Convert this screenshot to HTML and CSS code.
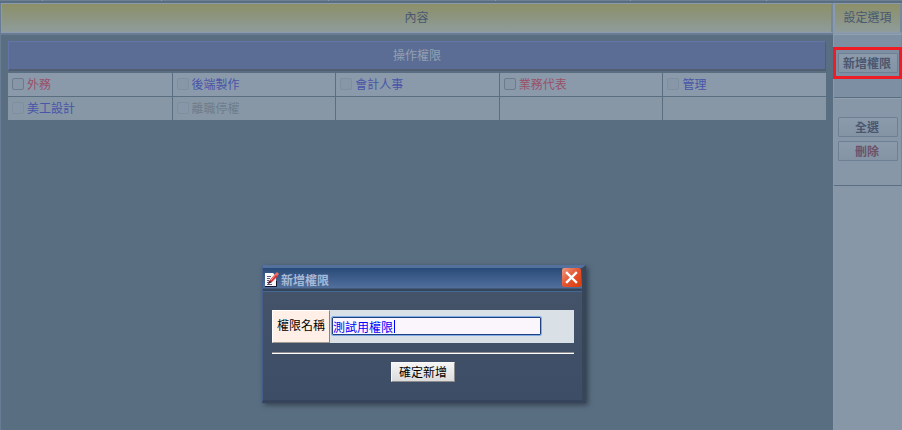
FILE: index.html
```html
<!DOCTYPE html>
<html lang="zh-Hant">
  <head>
    <meta charset="UTF-8" />
    <meta name="viewport" content="width=device-width, initial-scale=1.0" />
    <title>操作權限</title>
    <link rel="stylesheet" href="styles.css">
  </head>
  <body>
    <div class="top-strip">
      <span></span><span></span><span></span><span></span><span></span><span></span>
    </div>

    <div class="page">
      <main class="content">
        <h2 class="column-title">內容</h2>
        <div class="content-body">
          <h3 class="banner">操作權限</h3>
          <table class="permissions">
            <tr>
              <td><label class="red"><input type="checkbox" />外務</label></td>
              <td><label><input type="checkbox" disabled />後端製作</label></td>
              <td><label><input type="checkbox" disabled />會計人事</label></td>
              <td><label class="red"><input type="checkbox" />業務代表</label></td>
              <td><label><input type="checkbox" disabled />管理</label></td>
            </tr>
            <tr>
              <td><label><input type="checkbox" disabled />美工設計</label></td>
              <td><label class="gray"><input type="checkbox" disabled />離職停權</label></td>
              <td></td>
              <td></td>
              <td></td>
            </tr>
          </table>
        </div>
      </main>

      <aside class="options">
        <h2 class="column-title">設定選項</h2>
        <div class="option-group add-group">
          <div class="marked"><button type="button">新增權限</button></div>
        </div>
        <div class="option-group select-group">
          <button type="button">全選</button>
          <button type="button" class="delete">刪除</button>
        </div>
      </aside>
    </div>

    <form class="dialog" role="dialog" aria-labelledby="dialogTitle">
      <div class="dialog-title">
        <svg class="note-icon" width="15" height="17" viewBox="0 0 15 17" aria-hidden="true">
          <path d="M1 2h8l3 3v11H1z" fill="#f8f8fa" />
          <path d="M1 15.500h11.500V10" fill="none" stroke="#15152a" />
          <path d="M3 5.500h4M3 7.500h3M3 9.500h2M3 11.500h3M3 13.500h5" stroke="#5a5a80" />
          <path d="M5 10l6-7 3 2-6 6-4 2z" fill="#d83a3a" />
          <path d="M7 9l5-6" stroke="#ff9a8c" />
          <path d="M11 3l2-2 2 2-2 2z" fill="#f06a60" />
          <path d="M4 13l1-3 3 1z" fill="#222238" />
        </svg>
        <span id="dialogTitle">新增權限</span>
        <button type="button" class="close" aria-label="關閉">
          <svg width="19" height="19" viewBox="0 0 19 19" aria-hidden="true">
            <path d="M5 5l9 9M14 5l-9 9" stroke="#fff" stroke-width="2.400" stroke-linecap="square" />
          </svg>
        </button>
      </div>
      <div class="dialog-body">
        <div class="field">
          <label for="permissionName">權限名稱</label>
          <div class="field-value">
            <input type="text" id="permissionName" value="測試用權限" />
          </div>
        </div>
        <hr />
        <button type="submit" class="confirm">確定新增</button>
      </div>
    </form>
  </body>
</html>
```

FILE: styles.css
```css
* {
  box-sizing: border-box;
}
body {
  display: flex;
  flex-direction: column;
  min-height: 100vh;
  margin: 0;
  background: #5a6e82;
  font-family: "Noto Sans CJK TC", sans-serif;
  font-size: 12px;
  line-height: 16px;
  color: #4a5870;
}
h2,
h3 {
  margin: 0;
  font-size: 12px;
  font-weight: normal;
  text-align: center;
}
button,
input {
  font: inherit;
}

/* bottom edge of the row above */
.top-strip {
  display: grid;
  grid-template-columns: 43px 119px 167px 167px 135px 136px;
  height: 3px;
  background: #6d8093;
  border-bottom: 2px solid #5a6e82;
}
.top-strip span {
  border-right: 1px solid #8a9aab;
}

.page {
  display: flex;
  flex: 1;
}
.content {
  display: flex;
  flex: 1;
  flex-direction: column;
  border-left: 1px solid #687c93;
}
.column-title {
  height: 30px;
  padding: 5px 0;
  border: 1px solid #8b9aac;
  border-right: 2px solid #74879b;
  background: linear-gradient(#8c8f68, #8e9c9b);
}
.content-body {
  flex: 1;
  padding: 6px 7px 0;
  border-top: 2px solid #687c93;
}
.banner {
  height: 30px;
  margin-bottom: 2px;
  padding: 5px 0;
  border: 1px solid #6274a8;
  border-right-color: #505e74;
  border-bottom: 2px solid #505e70;
  background: #5b6d95;
  color: #93a1b2;
}

.permissions {
  width: 100%;
  border-spacing: 0;
  table-layout: fixed;
}
.permissions td {
  height: 23px;
  padding: 0 4px 1px;
  background: #8a9aab;
}
.permissions tr + tr td {
  height: 24px;
  border-top: 1px solid #5a6e82;
  background: #8797a6;
}
.permissions td + td {
  border-left: 1px solid #5a6e82;
}
.permissions label {
  display: flex;
  align-items: center;
  gap: 3px;
  color: #4854a8;
}
.permissions .red {
  color: #9a5068;
}
.permissions .gray {
  color: #6d7d8c;
}
.permissions input {
  appearance: none;
  width: 12px;
  height: 12px;
  margin: 0;
  border: 1px solid #6d7b8c;
  border-radius: 2px;
  background: #8797a7;
}
.permissions input:disabled {
  border-color: #7f8f9f;
}

.options {
  width: 69px;
  border-left: 1px solid #8a9aab;
  background: #8797a8;
}
.options .column-title {
  margin-bottom: 1px;
}
.option-group {
  display: flex;
  flex-direction: column;
  gap: 4px;
  padding: 18px 3px 0 4px;
  border-top: 1px solid #8fa0b1;
  border-right: 1px solid #74879b;
  border-bottom: 1px solid #5c6e82;
}
.add-group {
  height: 64px;
  background: #7d90a3;
}
.select-group {
  height: 88px;
}
.option-group button {
  width: 100%;
  height: 20px;
  padding: 0 2px 0 0;
  border: 1px solid #6d7f92;
  border-radius: 1px;
  background: linear-gradient(#8b9bac, #8494a4);
  color: #4c566e;
  font-weight: bold;
  line-height: 16px;
}
.option-group .delete {
  color: #6d5268;
}
.marked {
  position: relative;
}
.marked::after {
  content: "";
  position: absolute;
  inset: -6px -4px -6px -5px;
  border: 3px solid #ee1c24;
}

.dialog {
  position: absolute;
  top: 265px;
  left: 262px;
  width: 324px;
  border: 1px solid #435f8a;
  border-top: 3px solid #54709c;
  border-right: 4px solid #38465a;
  border-bottom: 3px solid #35445a;
  background: linear-gradient(#455468, #3d4d66);
  box-shadow: 2px 2px 5px #34414f;
}
.dialog-title {
  display: flex;
  align-items: center;
  height: 24px;
  padding-left: 1px;
  border-bottom: 1px solid #466894;
  background: linear-gradient(#294a78, #526f9c 20px, #34445a 21px);
  color: #a6bad8;
  font-weight: bold;
}
.note-icon {
  margin-right: 2px;
}
.close {
  align-self: flex-start;
  width: 19px;
  height: 19px;
  margin: 0 1px 0 auto;
  padding: 0;
  border: 0;
  border-radius: 2px;
  background: linear-gradient(135deg, #ef9b83, #e35330 50%, #dd3b08);
}
.close svg {
  display: block;
}
.dialog-body {
  padding: 18px 8px 18px 9px;
}
.field {
  display: flex;
  height: 33px;
}
.field label {
  width: 58px;
  padding: 6px 4px;
  border: 1px solid #fff;
  border-right-color: #8a8480;
  border-bottom-color: #a09a94;
  background: #ffefe6;
  color: #000;
  white-space: nowrap;
}
.field-value {
  flex: 1;
  padding: 7px 2px;
  background: #d9e1e7;
}
.field input {
  display: block;
  width: 209px;
  height: 18px;
  padding: 0;
  border: 1px solid #1f417f;
  border-radius: 1px;
  outline: 1px solid #80ace8;
  /* text cursor after the five characters */
  background: linear-gradient(#00f, #00f) 61px 2px / 1px 13px no-repeat #fbf5fc;
  color: #00f;
}
hr {
  height: 2px;
  margin: 9px 0 8px;
  border: 0;
  border-top: 1px solid #8f8f8f;
  background: #fff;
}
.confirm {
  display: block;
  width: 64px;
  height: 20px;
  margin: 0 auto;
  padding: 0;
  border: 1px solid #f8f8f8;
  border-right-color: #8c8c8c;
  border-bottom-color: #8c8c8c;
  background: linear-gradient(#f5f5f5, #dcdcdc);
  color: #000;
}
```
